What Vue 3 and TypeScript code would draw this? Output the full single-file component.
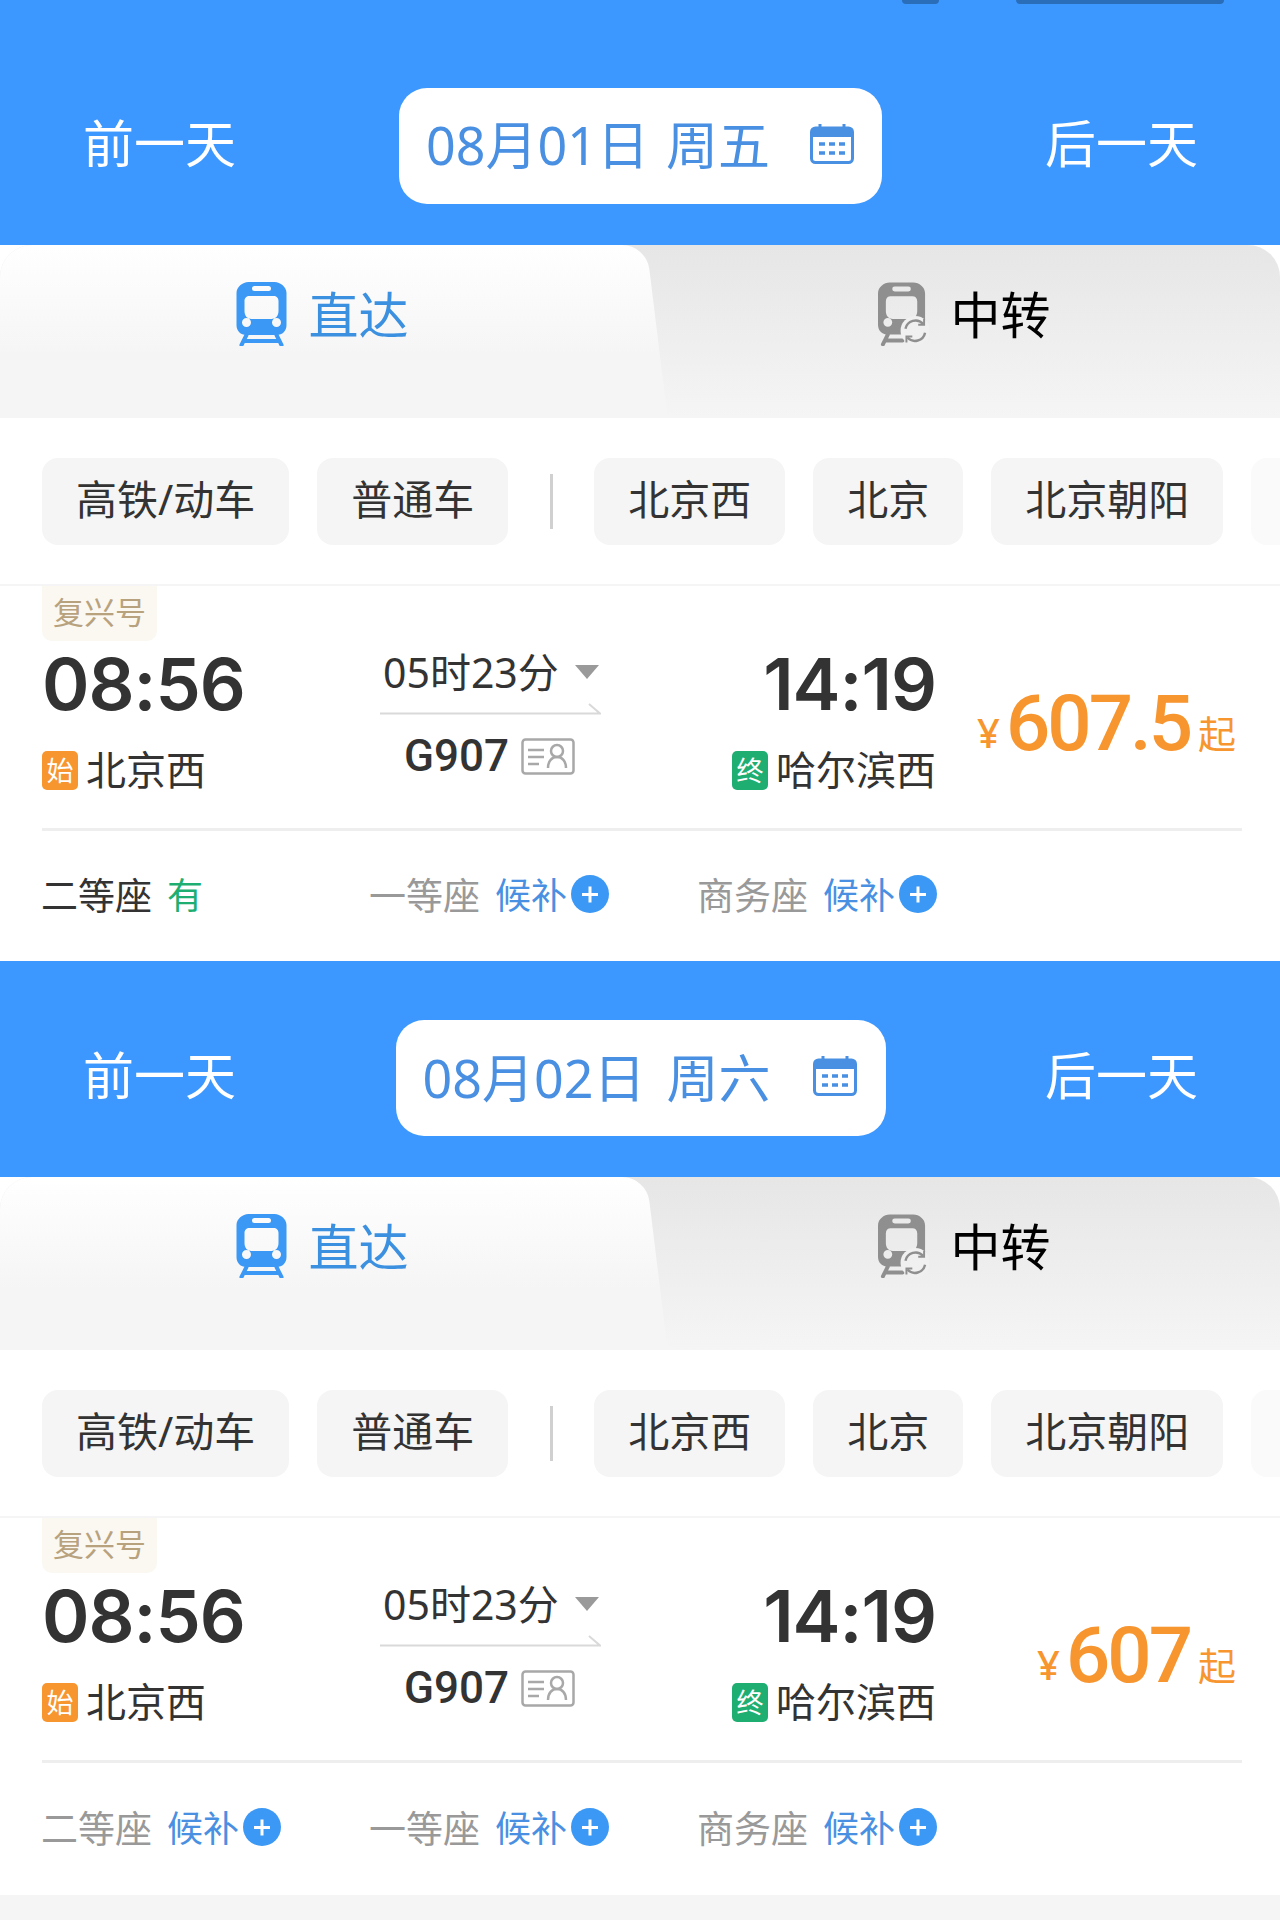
<template>
  <div class="page">
    <div class="status-blob blob-a"></div>
    <div class="status-blob blob-b"></div>
    <section v-for="day in days" :key="day.date" class="day">
      <div class="date-bar" :class="{ first: day.first }">
        <span class="day-link">前一天</span>
        <div class="date-pill" :class="{ wide: !day.first }">
          <span class="date-text">{{ day.date }}</span>
          <span class="week-text">{{ day.week }}</span>
          <svg class="cal-icon" viewBox="0 0 44 40" fill="none">
            <path d="M10 0v6M34 0v6" stroke="#4a90e2" stroke-width="3" stroke-linecap="round" />
            <rect x="1.5" y="4" width="41" height="34.500" rx="4" stroke="#4a90e2" stroke-width="3" />
            <path d="M2 8a4 4 0 0 1 4-4h32a4 4 0 0 1 4 4v5H2z" fill="#4a90e2" />
            <path d="M9 20h6M19 20h6M29 20h6M9 29h6M19 29h6M29 29h6" stroke="#4a90e2" stroke-width="3.500" />
          </svg>
        </div>
        <span class="day-link">后一天</span>
      </div>

      <div class="tabs">
        <div class="tab tab-active">
          <svg class="train-icon" viewBox="0 0 50 64">
            <path
              fill="#3c98f5"
              fill-rule="evenodd"
              d="M12 0h26c6 0 12 5 12 11v32c0 6-4 10-10 10H10C4 53 0 49 0 43V11C0 5 6 0 12 0zM18 4a1.500 1.500 0 0 0 0 5h14a1.500 1.500 0 0 0 0-5zM13 14c-3 0-5 2-5 5v10c0 5 3 8 7 8h20c4 0 7-3 7-8V19c0-3-2-5-5-5zM10 36a4.500 4.500 0 1 0 .01 9 4.500 4.500 0 0 0-.01-9zM40 36a4.500 4.500 0 1 0 .01 9 4.500 4.500 0 0 0-.01-9z"
            />
            <path d="M10 53 5 63M40 53l5 10M9 59h32" stroke="#3c98f5" stroke-width="4" stroke-linecap="round" fill="none" />
          </svg>
          <span>直达</span>
        </div>
        <div class="tab tab-other">
          <svg class="train-icon" viewBox="0 0 52 64">
            <path
              fill="#8f8f8f"
              fill-rule="evenodd"
              d="M12 0h24c6 0 12 5 12 11v32c0 6-4 10-10 10H10C4 53 0 49 0 43V11C0 5 6 0 12 0zM17 4a1.500 1.500 0 0 0 0 5h14a1.500 1.500 0 0 0 0-5zM13 14c-3 0-5 2-5 5v10c0 5 3 8 7 8h18c4 0 7-3 7-8V19c0-3-2-5-5-5zM10 36a4.500 4.500 0 1 0 .01 9 4.500 4.500 0 0 0-.01-9z"
            />
            <path d="M10 53 5 63M9 59h16" stroke="#8f8f8f" stroke-width="4" stroke-linecap="round" fill="none" />
            <circle cx="38" cy="49" r="15" fill="#f0f0f0" />
            <path d="M28 47a10.500 10.500 0 0 1 18-5M48 51a10.500 10.500 0 0 1-18 5" stroke="#8f8f8f" stroke-width="2.500" fill="none" />
            <path d="M47 37v6h-6M29 61v-6h6" stroke="#8f8f8f" stroke-width="2" fill="none" />
          </svg>
          <span>中转</span>
        </div>
      </div>

      <div class="filters">
        <span class="chip" v-for="name in trainTypes" :key="name">{{ name }}</span>
        <span class="filter-sep"></span>
        <span class="chip" v-for="name in stations" :key="name">{{ name }}</span>
        <span class="chip chip-cut"></span>
      </div>

      <div class="card">
        <div class="badge">复兴号</div>
        <div class="route">
          <div class="dep">
            <div class="time">08:56</div>
            <div class="station">
              <span class="tag tag-start">始</span>
              <span>北京西</span>
            </div>
          </div>
          <div class="mid">
            <div class="duration">
              <span>05时23分</span>
              <span class="caret"></span>
            </div>
            <svg class="route-line" viewBox="0 0 221 12" fill="none">
              <path d="M0 10.500h220L209 1" stroke="#d9d9d9" stroke-width="2" />
            </svg>
            <div class="train-no">
              <span>G907</span>
              <svg class="id-icon" viewBox="0 0 54 37" fill="none" stroke="#a8a8a8">
                <rect x="1.500" y="1.500" width="51" height="34" rx="3" stroke-width="2.500" />
                <path d="M7 12h16M7 19h16M7 26h11" stroke-width="2.500" />
                <circle cx="36" cy="13" r="6" stroke-width="2.500" />
                <path d="M27 30c0-7 4-11 9-11s9 4 9 11" stroke-width="2.500" />
              </svg>
            </div>
          </div>
          <div class="arr">
            <div class="time">14:19</div>
            <div class="station">
              <span class="tag tag-end">终</span>
              <span>哈尔滨西</span>
            </div>
          </div>
          <div class="price">
            <span class="yen">¥</span>
            <span class="amount">{{ day.price }}</span>
            <span class="from">起</span>
          </div>
        </div>
        <div class="seats">
          <div v-for="seat in day.seats" :key="seat.name" class="seat" :class="{ open: seat.open }">
            <span class="seat-name">{{ seat.name }}</span>
            <span v-if="seat.open" class="seat-open">有</span>
            <template v-else>
              <span class="seat-wait">候补</span>
              <span class="plus"></span>
            </template>
          </div>
        </div>
      </div>
    </section>
  </div>
</template>

<script setup lang="ts">
interface Seat {
  name: string;
  open: boolean;
}

interface Day {
  date: string;
  week: string;
  price: string;
  first: boolean;
  seats: Seat[];
}

const trainTypes = ["高铁/动车", "普通车"];
const stations = ["北京西", "北京", "北京朝阳"];

const days: Day[] = [
  {
    date: "08月01日",
    week: "周五",
    price: "607.5",
    first: true,
    seats: [
      { name: "二等座", open: true },
      { name: "一等座", open: false },
      { name: "商务座", open: false },
    ],
  },
  {
    date: "08月02日",
    week: "周六",
    price: "607",
    first: false,
    seats: [
      { name: "二等座", open: false },
      { name: "一等座", open: false },
      { name: "商务座", open: false },
    ],
  },
];
</script>

<style>
body {
  background: #f5f5f5;
}
</style>

<style scoped>
.page {
  position: relative;
  width: 1280px;
  font-family: "Noto Sans", "Noto Sans CJK SC", sans-serif;
  color: #333;
}

.status-blob {
  position: absolute;
  top: 0;
  height: 4px;
  background: #2a6db8;
  border-radius: 0 0 20px 20px;
}

.blob-a {
  left: 902px;
  width: 37px;
}

.blob-b {
  left: 1016px;
  width: 208px;
}

.day {
  background: #fff;
}

.date-bar {
  display: flex;
  align-items: center;
  justify-content: space-between;
  height: 216px;
  padding: 18px 82px 0 83px;
  box-sizing: border-box;
  background: #3c98ff;
}

.date-bar.first {
  height: 245px;
  padding-top: 46px;
}

.day-link {
  margin-bottom: 6px;
  font-size: 51px;
  line-height: 60px;
  color: #fff;
}

.date-pill {
  display: flex;
  align-items: center;
  width: 483px;
  height: 116px;
  padding-left: 27px;
  box-sizing: border-box;
  background: #fff;
  border-radius: 28px;
  color: #4a90e2;
  font-size: 52px;
}

.date-pill.wide {
  width: 490px;
}

.date-text,
.week-text {
  margin-bottom: 6px;
}

.week-text {
  margin-left: 17px;
}

.wide .week-text {
  margin-left: 21px;
}

.cal-icon {
  width: 44px;
  height: 40px;
  margin-left: 40px;
  margin-bottom: 4px;
}

.wide .cal-icon {
  margin-left: 42px;
}

.tabs {
  display: flex;
  height: 173px;
  background: linear-gradient(#e6e6e6, #f5f5f5);
  border-radius: 32px 32px 0 0;
  overflow: hidden;
}

.tab {
  display: flex;
  justify-content: center;
  gap: 22px;
  width: 50%;
  height: 120px;
  padding-top: 37px;
  box-sizing: border-box;
  font-size: 50px;
  line-height: 66px;
}

.tab-active {
  position: relative;
  padding-left: 4px;
  height: 100%;
  color: #3c90e0;
  background: linear-gradient(#fff, #f5f5f5 65%);
  border-top-right-radius: 24px;
}

.tab-active::after {
  content: "";
  position: absolute;
  top: 0;
  right: -17px;
  width: 40px;
  height: 100%;
  background: linear-gradient(#fff, #f5f5f5 65%);
  transform: skewX(7deg);
  border-top-right-radius: 24px;
}

.tab-other {
  color: #000;
  padding-left: 8px;
}

.train-icon {
  width: 51px;
  height: 64px;
}

.filters {
  display: flex;
  align-items: center;
  height: 168px;
  padding-left: 42px;
  overflow: hidden;
  border-bottom: 2px solid #f5f5f5;
  box-sizing: border-box;
}

.chip {
  flex: none;
  height: 87px;
  line-height: 83px;
  padding: 0 34px;
  margin-right: 28px;
  background: #f5f5f5;
  border-radius: 16px;
  font-size: 41px;
  color: #333;
}

.chip-cut {
  width: 60px;
  padding: 0;
  opacity: 0.5;
}

.filter-sep {
  flex: none;
  width: 3px;
  height: 55px;
  margin: 0 41px 0 14px;
  background: #d0d0d0;
}

.card {
  padding: 0 38px 0 42px;
}

.badge {
  width: 115px;
  height: 55px;
  line-height: 52px;
  text-align: center;
  background: #fbf8f2;
  border-radius: 0 0 10px 10px;
  font-size: 31px;
  color: #b8a27e;
}

.route {
  display: flex;
  height: 149px;
  margin-top: 6px;
}

.dep {
  width: 338px;
}

.time {
  height: 74px;
  line-height: 74px;
  font-family: Inter, sans-serif;
  font-weight: 600;
  font-size: 72px;
  letter-spacing: -1px;
  color: #333;
}

.station {
  display: flex;
  align-items: center;
  gap: 8px;
  height: 40px;
  margin-top: 29px;
  font-size: 40px;
  line-height: 40px;
}

.tag {
  width: 36px;
  height: 39px;
  line-height: 39px;
  text-align: center;
  border-radius: 5px;
  color: #fff;
  font-size: 27px;
}

.tag-start {
  background: #f7952f;
}

.tag-end {
  background: #1fae72;
}

.mid {
  width: 221px;
}

.duration {
  display: flex;
  align-items: center;
  height: 46px;
  margin-bottom: 4px;
  padding-left: 3px;
  font-size: 41px;
}

.caret {
  margin-left: 16px;
  margin-top: 4px;
  border-left: 12px solid transparent;
  border-right: 12px solid transparent;
  border-top: 14px solid #9a9a9a;
}

.route-line {
  display: block;
  width: 221px;
  height: 12px;
  margin-top: 10px;
}

.train-no {
  display: flex;
  align-items: center;
  justify-content: flex-start;
  gap: 12px;
  height: 40px;
  margin-top: 21px;
  padding-left: 24px;
  font-family: Roboto, sans-serif;
  font-weight: 500;
  font-size: 44px;
}

.id-icon {
  width: 54px;
  height: 37px;
}

.arr {
  display: flex;
  flex-direction: column;
  align-items: flex-end;
  width: 335px;
}

.price {
  flex: 1;
  display: flex;
  align-items: baseline;
  justify-content: flex-end;
  align-self: center;
  padding-right: 6px;
  margin-top: 5px;
  color: #f7952f;
}

.yen {
  font-size: 40px;
  font-weight: 500;
  margin-right: 6px;
  transform: translateY(-2px);
}

.amount {
  font-family: Roboto, sans-serif;
  font-weight: 500;
  font-size: 78px;
  line-height: 80px;
  letter-spacing: -3px;
}

.from {
  font-size: 38px;
  margin-left: 8px;
  transform: translateY(-2px);
}

.seats {
  display: flex;
  align-items: center;
  height: 133px;
  margin-top: 32px;
  padding-bottom: 5px;
  border-top: 3px solid #eeeeee;
  box-sizing: border-box;
}

.day + .day .seats {
  height: 135px;
}

.seat {
  display: flex;
  align-items: center;
  width: 328px;
  margin-left: -1px;
  margin-right: 1px;
  font-size: 36px;
  color: #999;
}

.seat.open {
  color: #333;
}

.seat-name {
  margin-right: 15px;
  font-size: 37px;
}

.seat-open {
  color: #1fae72;
}

.seat-wait {
  color: #4a90e2;
}

.plus {
  position: relative;
  width: 38px;
  height: 38px;
  margin-left: 4px;
  border-radius: 50%;
  background: #3c98f5;
}

.plus::before,
.plus::after {
  content: "";
  position: absolute;
  left: 11px;
  top: 18px;
  width: 16px;
  height: 3px;
  background: #fff;
}

.plus::after {
  transform: rotate(90deg);
}
</style>
